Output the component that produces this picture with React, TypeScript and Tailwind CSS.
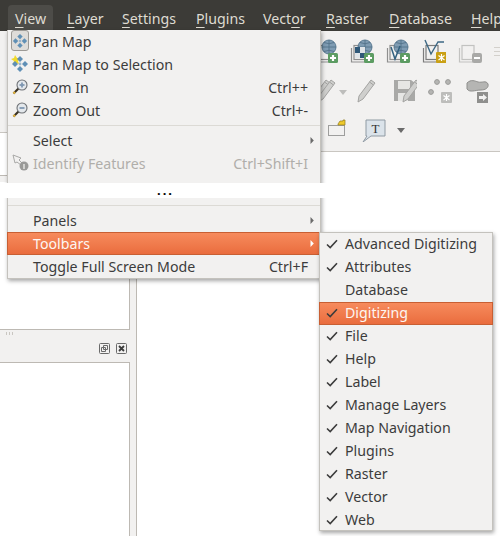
const font = "font-['Noto_Sans',sans-serif]";

const menuBar = [
  { before: "", key: "V", after: "iew", className: "w-[52px]" },
  { before: "", key: "L", after: "ayer", className: "w-[55px]" },
  { before: "", key: "S", after: "ettings", className: "w-[74px]" },
  { before: "", key: "P", after: "lugins", className: "w-[67px]" },
  { before: "Vect", key: "o", after: "r", className: "w-[63px]" },
  { before: "", key: "R", after: "aster", className: "w-[63px]" },
  { before: "", key: "D", after: "atabase", className: "w-[82px]" },
  { before: "", key: "H", after: "elp", className: "w-[40px]" },
];

const toolbars = [
  { name: "Advanced Digitizing", on: true },
  { name: "Attributes", on: true },
  { name: "Database", on: false },
  { name: "Digitizing", on: true, active: true },
  { name: "File", on: true },
  { name: "Help", on: true },
  { name: "Label", on: true },
  { name: "Manage Layers", on: true },
  { name: "Map Navigation", on: true },
  { name: "Plugins", on: true },
  { name: "Raster", on: true },
  { name: "Vector", on: true },
  { name: "Web", on: true },
];

function Diamonds({ yellow, size = 18 }: { yellow?: boolean; size?: number }) {
  return (
    <svg width={size} height={size} viewBox="0 0 18 18" className="shrink-0">
      {yellow && <path d="M0 4 L3 3 L4 0 L6 3 L9 3 L7 6 L8 9 L5 8 L2 9 L3 6 Z" fill="#f0d92c" />}
      <path d="M9 1 L12 4 L9 7 L6 4 Z" fill="#5f8fb5" />
      <path d="M9 11 L12 14 L9 17 L6 14 Z" fill="#5f8fb5" />
      <path d="M1 9 L4 6 L7 9 L4 12 Z" fill="#5f8fb5" />
      <path d="M11 9 L14 6 L17 9 L14 12 Z" fill="#5f8fb5" />
      <circle cx="9" cy="9" r="1.4" fill="#9db7cc" />
    </svg>
  );
}

function Magnifier({ plus }: { plus?: boolean }) {
  return (
    <svg width="16" height="16" viewBox="0 0 16 16">
      <path d="M6.5 9.5 L1.5 14.5" stroke="#3b3325" strokeWidth="2.2" />
      <path d="M3 13 L1.5 14.5" stroke="#e5b53c" strokeWidth="2.2" />
      <circle cx="10" cy="6" r="5" fill="#e4e8ec" stroke="#6e7276" strokeWidth="1.1" />
      <path d="M7.5 6 H12.5" stroke="#7f98b3" strokeWidth="1.8" />
      {plus && <path d="M10 3.5 V8.5" stroke="#7f98b3" strokeWidth="1.8" />}
    </svg>
  );
}

function Check() {
  return (
    <svg width="12" height="10" viewBox="0 0 12 10" className="shrink-0">
      <path d="M1 5.5 L4.2 8.5 L11 1.2" fill="none" stroke="#3c3c3c" strokeWidth="1.6" />
    </svg>
  );
}

function Arrow({ light }: { light?: boolean }) {
  return (
    <svg width="4" height="7" viewBox="0 0 4 7" className="-mr-[6px]">
      <path d="M0.5 0 L3.8 3.5 L0.5 7 Z" fill={light ? "#ffffff" : "#6b6b6b"} />
    </svg>
  );
}

function Globe() {
  return (
    <g>
      <circle cx="15" cy="8" r="7" fill="#7f9cb3" stroke="#5a7a92" />
      <path d="M8 8 H22 M15 1 V15 M10 3.5 Q15 6 20 3.5 M10 12.5 Q15 10 20 12.5" fill="none" stroke="#4f6e86" strokeWidth="0.8" />
    </g>
  );
}

function PlusBadge() {
  return (
    <g>
      <rect x="14" y="14" width="10" height="10" rx="1.5" fill="#5c9c62" />
      <path d="M19 16 V22 M16 19 H22" stroke="#ffffff" strokeWidth="2.2" />
    </g>
  );
}

function Layers({ stroke = "#8f8f8f" }: { stroke?: string }) {
  return (
    <g fill="none" stroke={stroke}>
      <path d="M1.5 9 V23 H15" strokeWidth="1.2" />
      <rect x="4" y="6.5" width="12" height="14" fill="#f2f1f0" strokeWidth="1.2" />
    </g>
  );
}

function Icon24({ children }: { children: React.ReactNode }) {
  return (
    <svg width="24" height="24" viewBox="0 0 24 24" className="shrink-0">
      {children}
    </svg>
  );
}

function Pencil({ x = 0 }: { x?: number }) {
  return (
    <g transform={`translate(${x} 0)`}>
      <path d="M15 1 L19 4 L7 20 L2 23 L3 17 Z" fill="#cfcfcd" stroke="#a3a3a1" />
      <path d="M13.5 3 L17.5 6" stroke="#a3a3a1" />
    </g>
  );
}

function Row({ label, shortcut, icon, arrow, disabled, active }: { label: string; shortcut?: string; icon?: React.ReactNode; arrow?: boolean; disabled?: boolean; active?: boolean }) {
  return (
    <div
      className={`flex h-[23px] items-center pl-[25px] pr-[12px] ${active ? "-mx-px bg-gradient-to-b from-[#f78c5e] to-[#e96b3c] pl-[26px] pr-[13px] text-[#fdf6f2] shadow-[inset_0_0_0_1px_#c85f33]" : ""} ${disabled ? "text-[#b0aeaa]" : ""}`}
    >
      <span className="relative flex-1">
        {icon && <span className="absolute left-[-22px] top-[1px] flex h-[18px] w-[18px] items-center justify-center">{icon}</span>}
        {label}
      </span>
      {shortcut && <span>{shortcut}</span>}
      {arrow && <Arrow light={active} />}
    </div>
  );
}

function Separator() {
  return <div className="h-px bg-[#dcdad5]" />;
}

export default function App() {
  return (
    <div className={`relative flex h-[536px] w-[500px] flex-col overflow-hidden bg-[#f2f1f0] text-[14.2px] text-[#3c3c3c] ${font}`}>
      {/* menu bar */}
      <div className="flex h-[31px] shrink-0 items-end bg-[#3c3b37] pb-[2px] pl-[15px] leading-[20px] text-[#dfdbd2]">
        {menuBar.map((m, i) => (
          <div key={i} className={`relative shrink-0 ${m.className}`}>
            {i === 0 && <div className="absolute left-[-7px] top-[-4px] h-[27px] w-[45px] rounded-t-[4px] bg-[#4d4c48]" />}
            <span className="relative">
              {m.before}
              <span className="underline decoration-[1px] underline-offset-[3px]">{m.key}</span>
              {m.after}
            </span>
          </div>
        ))}
      </div>

      <div className="flex min-h-0 flex-1">
        {/* left docks */}
        <div className="flex w-[136px] shrink-0 flex-col">
          <div className="h-[102px] shrink-0 border-b border-[#c9c6c1]" />
          <div className="h-[43px] w-[130px] shrink-0 border-b border-r border-[#bdb9b3] bg-white" />
          <div className="h-[6px] shrink-0" />
          <div className="h-[148px] w-[130px] shrink-0 border-b border-r border-[#bdb9b3] bg-white" />
          <div className="relative flex h-[32px] w-[130px] shrink-0 items-center justify-end gap-[6px] pr-[3px] pt-[5px]">
            <div className="absolute left-[6px] top-[2px] flex gap-[2px]">
              <div className="h-[3px] w-px bg-[#c9c6c1]" />
              <div className="h-[3px] w-px bg-[#c9c6c1]" />
              <div className="h-[3px] w-px bg-[#c9c6c1]" />
            </div>
            <svg width="11" height="11" viewBox="0 0 11 11">
              <rect x="0.5" y="0.5" width="10" height="10" rx="1" fill="none" stroke="#6a6a6a" />
              <path d="M4.5 2.5 H8.5 V6.5 H4.5 Z M2.5 4.5 H6.5 V8.5 H2.5 Z" fill="none" stroke="#6a6a6a" />
            </svg>
            <svg width="11" height="11" viewBox="0 0 11 11">
              <rect x="0.5" y="0.5" width="10" height="10" rx="1" fill="none" stroke="#6a6a6a" />
              <path d="M3 3 L8 8 M8 3 L3 8" stroke="#3c3c3c" strokeWidth="1.8" />
            </svg>
          </div>
          <div className="min-h-0 w-[130px] flex-1 border-r border-t border-[#bdb9b3] bg-white" />
        </div>

        {/* toolbars and map canvas */}
        <div className="flex min-w-0 flex-1 flex-col">
          <div className="flex h-[121px] shrink-0 flex-col border-b border-[#c9c6c1] pl-[178px]">
            <div className="mt-[8px] flex h-[24px] gap-[12px]">
              <Icon24><Layers /><Globe /><PlusBadge /></Icon24>
              <Icon24>
                <Layers />
                <Globe />
                <rect x="5" y="8" width="10" height="11" fill="#dfe4e8" />
                <rect x="5" y="8" width="5" height="6" fill="#2f5878" />
                <rect x="10" y="14" width="5" height="5" fill="#2f5878" />
                <PlusBadge />
              </Icon24>
              <Icon24>
                <Layers />
                <Globe />
                <path d="M5 8 L9 20 L14 7" fill="none" stroke="#32607f" strokeWidth="1.5" />
                <PlusBadge />
              </Icon24>
              <Icon24>
                <Layers stroke="#7c7c7c" />
                <path d="M3 1 L9 15 L16 3 H22" fill="none" stroke="#3e6884" strokeWidth="1.4" />
                <rect x="14" y="13" width="11" height="11" rx="1" fill="#caa014" />
                <path d="M19.5 15 V22 M16.5 16.5 L22.5 21 M22.5 16.5 L16.5 21" stroke="#ffffff" strokeWidth="1.2" />
              </Icon24>
              <Icon24>
                <Layers stroke="#c2c2c0" />
                <rect x="14" y="14" width="10" height="10" rx="2" fill="#a9a9a7" />
                <path d="M16 19 H22" stroke="#ffffff" strokeWidth="2" />
              </Icon24>
              <div className="flex h-[24px] w-[8px] shrink-0 flex-col justify-center gap-[3px]">
                <div className="h-px bg-[#d3d0cb]" />
                <div className="h-px bg-[#d3d0cb]" />
                <div className="h-px bg-[#d3d0cb]" />
              </div>
            </div>
            <div className="mt-[15px] flex h-[25px] items-center">
              <Icon24><Pencil x={-3} /><Pencil x={2} /></Icon24>
              <svg width="8" height="5" viewBox="0 0 8 5" className="ml-[1px] mt-[4px] shrink-0"><path d="M0 0 H8 L4 5 Z" fill="#bdbdbb" /></svg>
              <div className="ml-[9px]"><Icon24><Pencil /></Icon24></div>
              <div className="ml-[13px]">
                <Icon24>
                  <path d="M1 1 H18 L22 4 V22 H1 Z" fill="#a9a9a7" />
                  <rect x="5" y="2" width="12" height="8" fill="#e6e6e4" />
                  <rect x="5" y="14" width="10" height="8" fill="#e6e6e4" />
                  <Pencil x={8} />
                </Icon24>
              </div>
              <div className="ml-[11px]">
                <Icon24>
                  <circle cx="9" cy="3" r="2.4" fill="#b5b5b3" stroke="#9a9a98" />
                  <circle cx="20" cy="3" r="2.4" fill="#b5b5b3" stroke="#9a9a98" />
                  <circle cx="3" cy="13" r="2.4" fill="#b5b5b3" stroke="#9a9a98" />
                  <rect x="13" y="13" width="11" height="11" rx="1" fill="#bdbdbb" />
                  <path d="M18.5 15 V22 M15.5 16.5 L21.5 21 M21.5 16.5 L15.5 21" stroke="#ffffff" strokeWidth="1.2" />
                </Icon24>
              </div>
              <div className="ml-[13px]">
                <Icon24>
                  <path d="M2 4 C6 0 10 2 13 3 C17 4 21 1 23 5 C24 9 20 11 16 11 C10 11 5 14 2 10 Z" fill="#b5b5b3" stroke="#8f8f8d" />
                  <rect x="12" y="13" width="11" height="11" fill="#8f8f8d" />
                  <path d="M14 17 H18 V15 L22 18.5 L18 22 V20 H14 Z" fill="#f2f1f0" />
                </Icon24>
              </div>
            </div>
            <div className="mt-[15px] flex h-[24px] items-center">
              <div className="ml-[14px] mb-[4px]">
                <svg width="18" height="18" viewBox="0 0 18 18" className="shrink-0">
                  <rect x="0.5" y="6.5" width="16" height="10" fill="none" stroke="#4a4a4a" strokeDasharray="1 1" />
                  <path d="M10 5 L12 2 H15 V1 H17 V6 H10 Z" fill="#eec92a" stroke="#8f7a1e" strokeWidth="0.7" />
                </svg>
              </div>
              <div className="ml-[16px]">
                <Icon24>
                  <path d="M4 2 H23 V18 H9 L1 24 L5 18 H4 Z" fill="#dbe3ea" stroke="#8f9aa3" />
                  <text x="13.5" y="14.5" textAnchor="middle" fontSize="13" fontFamily="Liberation Serif, serif" fill="#333333">T</text>
                </Icon24>
              </div>
              <svg width="8" height="5" viewBox="0 0 8 5" className="ml-[11px] shrink-0"><path d="M0 0 H8 L4 5 Z" fill="#6b6b6b" /></svg>
            </div>
          </div>
          <div className="min-h-0 flex-1 border-l border-[#bdb9b3] bg-white" />
        </div>
      </div>

      {/* View menu */}
      <div className="absolute left-[7px] top-[30px] w-[314px] border border-t-0 border-[#c4c2bd] bg-[#f2f1f0] shadow-[1px_2px_4px_rgba(0,0,0,0.35)]">
        <Row label="Pan Map" icon={<span className="flex h-[21px] w-[18px] shrink-0 items-center justify-center rounded-[3px] border border-[#9c9a96] bg-[#dedcd9]"><Diamonds size={16} /></span>} />
        <Row label="Pan Map to Selection" icon={<Diamonds yellow />} />
        <Row label="Zoom In" shortcut="Ctrl++" icon={<Magnifier plus />} />
        <Row label="Zoom Out" shortcut="Ctrl+-" icon={<Magnifier />} />
        <div className="h-[7px] pt-[3px]"><Separator /></div>
        <Row label="Select" arrow />
        <Row
          label="Identify Features"
          shortcut="Ctrl+Shift+I"
          disabled
          icon={
            <svg width="17" height="18" viewBox="0 0 17 18">
              <path d="M1 1 L9 4 L7 6 L11 10 L9 11 L5 8 L3 9 Z" fill="#f2f1f0" stroke="#a8a8a6" />
              <circle cx="12" cy="12" r="4.5" fill="#9a9a98" />
              <path d="M12 10 V15" stroke="#e8e8e6" strokeWidth="1.4" />
            </svg>
          }
        />
        <div className="h-[30px]" />
        <Separator />
        <div className="h-[3px]" />
        <Row label="Panels" arrow />
        <Row label="Toolbars" arrow active />
        <Row label="Toggle Full Screen Mode" shortcut="Ctrl+F" />
      </div>

      {/* cropped-out band across the menu */}
      <div className="absolute left-0 top-[183px] flex h-[15px] w-[500px] items-center bg-white pl-[157px] text-[13px] font-bold leading-[15px] tracking-[2px] text-black">
        ...
      </div>

      {/* Toolbars submenu */}
      <div className="absolute left-[319px] top-[232px] h-[299px] w-[174px] border border-[#c4c2bd] bg-[#f2f1f0] shadow-[1px_2px_4px_rgba(0,0,0,0.35)]">
        {toolbars.map((t) => (
          <div
            key={t.name}
            className={`-mx-px flex h-[23px] items-center pb-[2px] pl-[7px] ${t.active ? "bg-gradient-to-b from-[#f78c5e] to-[#e96b3c] text-[#fdf6f2] shadow-[inset_0_0_0_1px_#c85f33]" : ""}`}
          >
            <div className="w-[19px] shrink-0">{t.on && <Check />}</div>
            <span>{t.name}</span>
          </div>
        ))}
      </div>
    </div>
  );
}
